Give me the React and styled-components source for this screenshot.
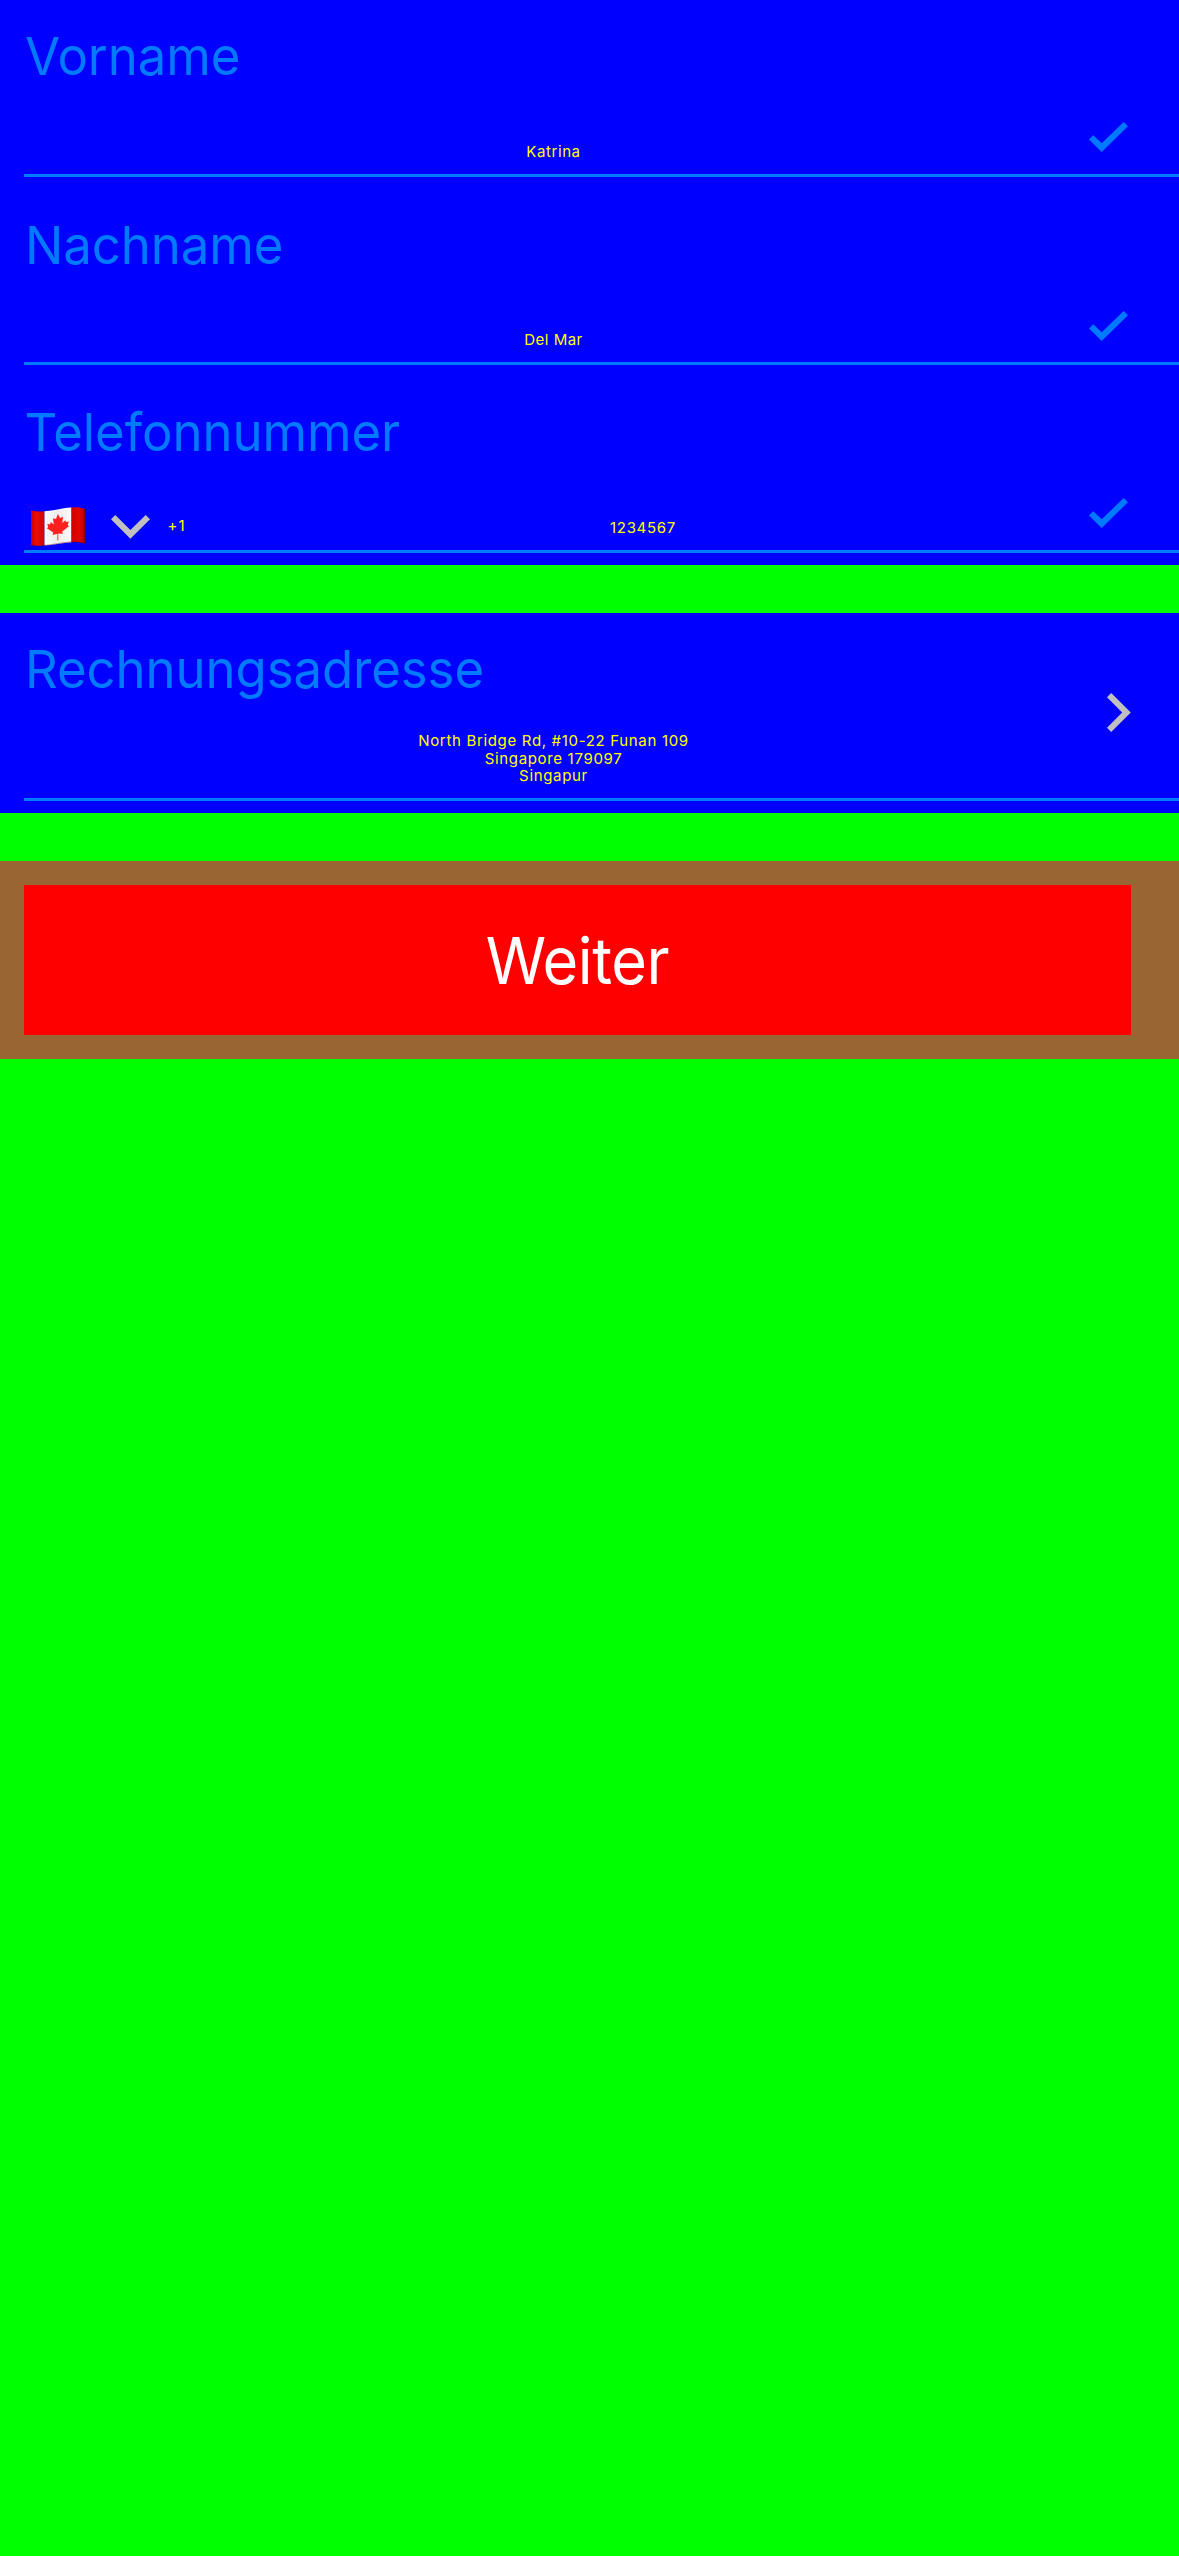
import React from "react";
import styled, { createGlobalStyle } from "styled-components";

const GlobalStyle = createGlobalStyle`
  * { box-sizing: border-box; }
  html, body { margin: 0; padding: 0; background: #00ff00; }
  body { font-family: Inter, "Liberation Sans", sans-serif; }
`;

const Page = styled.main`
  width: 1179px;
  min-height: 2556px;
  display: flex;
  flex-direction: column;
  gap: 48px;
  background: #00ff00;
`;

const Section = styled.section`
  display: flex;
  flex-direction: column;
  background: #0000ff;
`;

const Row = styled.div`
  height: ${(p) => p.$height}px;
  padding: 0 0 12px 24px;
`;

const RowInner = styled.div`
  height: 100%;
  display: flex;
  border-bottom: 3px solid #007aff;
`;

const Content = styled.div`
  width: 1059px;
  display: flex;
  flex-direction: column;
  justify-content: space-between;
  padding: ${(p) => p.$top}px 0 13px;
`;

const Label = styled.label`
  font-size: 52.5px;
  line-height: 64px;
  letter-spacing: -0.1px;
  color: #007aff;
  white-space: nowrap;
  padding-left: ${(p) => p.$indent}px;
  transform: scaleX(0.97);
  transform-origin: 0 50%;
`;

const Value = styled.div`
  flex: ${(p) => (p.$grow ? 1 : "none")};
  font-size: 15px;
  line-height: 17.7px;
  letter-spacing: ${(p) => p.$spacing}px;
  color: #ffff00;
  text-align: center;
`;

const PhoneRow = styled.div`
  display: flex;
  align-items: flex-end;
  height: 18px;
`;

const CountryPicker = styled.div`
  display: flex;
  align-items: flex-end;
  width: 143.5px;
  padding-left: 7px;
  gap: 26px;
  margin-bottom: -9px;
`;

const DialCode = styled.span`
  width: 35.5px;
  font-size: 15px;
  line-height: 18px;
  letter-spacing: 1px;
  color: #ffff00;
  margin-bottom: 2px;
`;

const IconSlot = styled.div`
  padding: ${(p) => p.$top}px 0 0 ${(p) => p.$left}px;
`;

const Icon = styled.svg`
  display: block;
  flex: none;
  overflow: visible;
  margin-bottom: ${(p) => p.$lift || 0}px;
`;

const Footer = styled.footer`
  height: 198px;
  padding: 24px 48px 24px 24px;
  background: #996633;
`;

const NextButton = styled.button`
  display: block;
  width: 100%;
  height: 150px;
  border: 0;
  padding: 2px 0 0;
  background: #ff0000;
  color: #ffffff;
  font-family: inherit;
  font-size: 64.5px;
  line-height: 78px;
  letter-spacing: -0.5px;
`;

const ButtonText = styled.span`
  display: inline-block;
  transform: scaleX(0.95);
`;

const Check = () => (
  <Icon width="39" height="30" viewBox="0 0 39 30">
    <path fill="#007aff" d="M0 17.5 4.3 13.2 12.7 21.3 34.7 0 39 4.2 12.7 30Z" />
  </Icon>
);

const ChevronDown = () => (
  <Icon width="39" height="24" viewBox="0 0 39 24" $lift={7}>
    <path fill="#c0c0c0" d="M0 4.2 4.3 0 19.4 15.1 34.7 0 39 4.2 19.4 23.8Z" />
  </Icon>
);

const ChevronRight = () => (
  <Icon width="24" height="39" viewBox="0 0 24 39">
    <path fill="#c0c0c0" d="M0 4.3 4.2 0 23.8 19.5 4.2 39 0 34.8 15.2 19.5Z" />
  </Icon>
);

const Flag = () => (
  <Icon width="54" height="39" viewBox="0 0 54 39">
    <defs>
      <linearGradient id="redLeft" x1="0" x2="1">
        <stop offset="0" stopColor="#c80000" />
        <stop offset="0.4" stopColor="#ea0c08" />
        <stop offset="1" stopColor="#d00400" />
      </linearGradient>
      <linearGradient id="redRight" x1="0" x2="1">
        <stop offset="0" stopColor="#d40000" />
        <stop offset="0.6" stopColor="#e00600" />
        <stop offset="1" stopColor="#b00000" />
      </linearGradient>
      <linearGradient id="cloth" x1="0" x2="1">
        <stop offset="0" stopColor="#fafafa" />
        <stop offset="0.5" stopColor="#ededed" />
        <stop offset="1" stopColor="#fafafa" />
      </linearGradient>
    </defs>
    <path fill="url(#redLeft)" d="M0 3.2C4 4.6 9 4.7 13.5 4.3V38.6C8 39.4 4 39.2 0 38Z" />
    <path fill="url(#cloth)" d="M13.5 4.3C22 3.8 31 .8 40.5 .4V35.2C31 35.8 22 38 13.5 38.6Z" />
    <path fill="url(#redRight)" d="M40.5 .4C45 0 50 .4 54 2V36.6C50 35.2 45 34.8 40.5 35.2Z" />
    <path
      fill="none"
      stroke="#600000"
      strokeOpacity="0.4"
      strokeWidth="1"
      d="M.5 38C4 39.2 8 39.2 13.5 38.4 22 37.8 31 35.4 40.5 34.9 45 34.6 50 35 53.5 36.2V2"
    />
    <path
      fill="#ff2020"
      d="M26.8 7 29 11.1 32 9.7 31.3 16 34.4 13.2 35 15.1 37.9 14.5 36.8 18 38 19.2 31.2 24.5 31.9 26.8 27.2 26.4 27.3 33.3H26.3L26.5 26.7 21.6 28 22.3 25.4 15.8 21.3 17.2 20 16.2 17 19.2 17.2 19.8 15.1 22.8 17.5 22 11.2 25 12Z"
    />
  </Icon>
);

function Field({ label, indent = 1, height, top, children, icon, iconTop, iconLeft }) {
  return (
    <Row $height={height}>
      <RowInner>
        <Content $top={top}>
          <Label $indent={indent}>{label}</Label>
          {children}
        </Content>
        <IconSlot $top={iconTop} $left={iconLeft}>
          {icon}
        </IconSlot>
      </RowInner>
    </Row>
  );
}

export default function App() {
  return (
    <>
      <GlobalStyle />
      <Page>
        <Section>
          <Field label="Vorname" height={189} top={24} icon={<Check />} iconTop={122} iconLeft={6}>
            <Value $spacing={0.58}>Katrina</Value>
          </Field>
          <Field label="Nachname" height={188} top={24} icon={<Check />} iconTop={122} iconLeft={6}>
            <Value $spacing={0.5}>Del Mar</Value>
          </Field>
          <Field
            label="Telefonnummer"
            indent={0.5}
            height={188}
            top={23}
            icon={<Check />}
            iconTop={121}
            iconLeft={6}
          >
            <PhoneRow>
              <CountryPicker>
                <Flag />
                <ChevronDown />
              </CountryPicker>
              <DialCode>+1</DialCode>
              <Value $grow $spacing={0.7}>
                1234567
              </Value>
            </PhoneRow>
          </Field>
        </Section>
        <Section>
          <Field
            label="Rechnungsadresse"
            height={200}
            top={24}
            icon={<ChevronRight />}
            iconTop={80}
            iconLeft={24}
          >
            <Value $spacing={0.67}>
              North Bridge Rd, #10-22 Funan 109
              <br />
              Singapore 179097
              <br />
              Singapur
            </Value>
          </Field>
        </Section>
        <Footer>
          <NextButton type="button">
            <ButtonText>Weiter</ButtonText>
          </NextButton>
        </Footer>
      </Page>
    </>
  );
}
